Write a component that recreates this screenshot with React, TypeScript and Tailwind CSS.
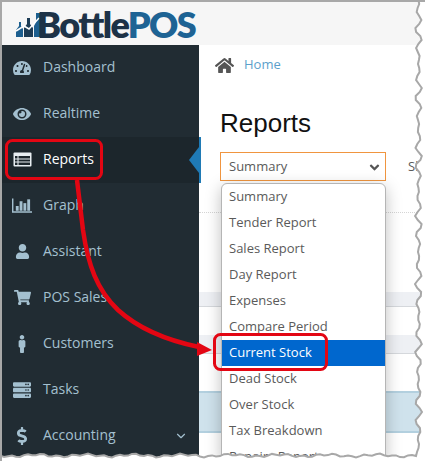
import { FaTachometerAlt, FaEye, FaUser, FaShoppingCart, FaMale, FaServer, FaDollarSign, FaHome, FaAngleDown } from "react-icons/fa";
import { FiChevronDown } from "react-icons/fi";

function ListAltIcon() {
  return (
    <svg width="19" height="15" viewBox="0 0 19 15">
      <rect x="0.5" y="0.5" width="18" height="14" rx="1" fill="#e8eef2" />
      <rect x="2" y="4" width="15" height="9" fill="#1c262c" />
      <path d="M5 4v9M2 7h15M2 10h15" stroke="#e8eef2" strokeWidth="1" />
    </svg>
  );
}

function BarChartIcon() {
  return (
    <svg width="21" height="16" viewBox="0 0 21 16" fill="#a4c0d0">
      <path d="M0 0h1.5v13.5H21V15H0z" />
      <rect x="4" y="8" width="3" height="5" />
      <rect x="8" y="3" width="3" height="10" />
      <rect x="12" y="5" width="3" height="8" />
      <rect x="16" y="1" width="3" height="12" />
    </svg>
  );
}

const NAV = [
  { name: "Dashboard", icon: <FaTachometerAlt size={18} /> },
  { name: "Realtime", icon: <FaEye size={18} /> },
  { name: "Reports", icon: <ListAltIcon />, active: true },
  { name: "Graph", icon: <BarChartIcon /> },
  { name: "Assistant", icon: <FaUser size={15} /> },
  { name: "POS Sales", icon: <FaShoppingCart size={17} /> },
  { name: "Customers", icon: <FaMale size={18} /> },
  { name: "Tasks", icon: <FaServer size={18} /> },
  { name: "Accounting", icon: <FaDollarSign size={18} />, caret: true },
];

const OPTIONS = [
  "Summary",
  "Tender Report",
  "Sales Report",
  "Day Report",
  "Expenses",
  "Compare Period",
  "Current Stock",
  "Dead Stock",
  "Over Stock",
  "Tax Breakdown",
  "Repairs Report",
];

// jagged screenshot edge, right side then bottom
function tornEdge() {
  const pts: string[] = [];
  for (let y = 0; y <= 455; y += 4) {
    const x = 418.5 + Math.sin(y * 0.37) * 2 + Math.sin(y * 1.3) * 1.5;
    pts.push(`${x.toFixed(1)},${y}`);
  }
  for (let x = 416; x >= 0; x -= 4) {
    const y = 455.5 + Math.sin(x * 0.41) * 1 + Math.sin(x * 1.7) * 1;
    pts.push(`${x},${y.toFixed(1)}`);
  }
  return pts.join(" ");
}

function Logo() {
  return (
    <div className="flex items-center pl-[13px] h-full">
      <svg width="30" height="28" viewBox="0 0 30 28" className="mt-[1px]">
        <path d="M1 27v-7l3-4v-4h2v4l2 3v8z" fill="#1d5f8f" />
        <path d="M9 27v-9l3-4v-6h3v6l3 4v9z" fill="#1d3c55" />
        <path d="M19 27v-11l2-4V3h4v9l2 3v12z" fill="#1d5f8f" />
        <path d="M1 21l8-5 5 3 10-11" fill="none" stroke="#fff" strokeWidth="1.5" />
      </svg>
      <span className="font-['Lato',sans-serif] font-extrabold text-[36px] leading-none tracking-[-1.6px] -ml-[8px] text-[#1d3247]">
        Bottle<span className="text-[#1e6394]">POS</span>
      </span>
    </div>
  );
}

export default function App() {
  return (
    <div className="relative w-[425px] h-[461px] overflow-hidden bg-white border-t-2 border-l-2 border-[#a8a8a8] font-['Open_Sans',sans-serif]">
      <header className="h-[43px] bg-[#f6f6f6]">
        <Logo />
      </header>

      <div className="flex">
        {/* Sidebar */}
        <nav className="w-[197px] h-[416px] shrink-0 bg-[#212c33]">
          {NAV.map((item) => (
            <div
              key={item.name}
              className={`relative flex items-center h-[46px] pl-[10px] pb-[3px] text-[14px] ${item.active ? "bg-[#1c262c] text-white" : "text-[#a4c0d0]"}`}
            >
              <span className="flex justify-center w-[20px] pt-[2px]">{item.icon}</span>
              <span className="ml-[11px]">{item.name}</span>
              {item.caret && <FiChevronDown size={14} className="absolute right-[11px] top-[16px]" />}
              {item.active && (
                <>
                  <span className="absolute right-[-2px] top-0 bottom-0 w-[2px] bg-[#1f7ab5]" />
                  <span className="absolute right-0 top-[10px] w-0 h-0 border-y-[13px] border-y-transparent border-r-[10px] border-r-[#1f7ab5]" />
                </>
              )}
            </div>
          ))}
        </nav>

        {/* Main */}
        <main className="relative flex-1 min-w-0">
          <div className="flex items-center gap-[10px] pl-[16px] h-[40px] text-[13px] text-[#5c9fcb]">
            <FaHome size={19} className="text-[#555]" />
            <span>Home</span>
          </div>
          <h1 className="pl-[21px] mt-[19px] h-[38px] font-['Liberation_Sans',sans-serif] text-[26px] leading-[38px] text-[#111]">
            Reports
          </h1>
          <div className="flex items-center pl-[21px] mt-[10px]">
            <div className="flex items-center justify-between w-[166px] shrink-0 h-[29px] pl-[8px] pr-[3px] pt-[1px] border border-[#f0953f] text-[13px] text-[#5a5a5a]">
              Summary
              <FaAngleDown size={15} className="text-[#555]" />
            </div>
            <span className="ml-[22px] text-[13px] text-[#5a5a5a] whitespace-nowrap">Show</span>
          </div>

          {/* page content behind the open select */}
          <div className="mt-[31px] border-t border-dotted border-[#d5d5d5]" />
          <div className="mt-[79px] h-[15px] bg-[#eef0f4] border-b border-[#d5d8dc]" />
          <div className="mt-[28px] h-[19px] bg-[#eef0f4] border-b border-[#d5d8dc]" />
          <div className="mt-[37px] h-[42px] bg-[#cfe2ec] border-y-2 border-[#b3d0df]" />

          {/* open select list */}
          <ul className="absolute left-[22px] top-[138px] w-[165px] h-[278px] overflow-hidden bg-white border border-[#b5b5b5] rounded-t-[6px] text-[13px] text-[#5a5a5a] shadow-[0_4px_16px_rgba(0,0,0,0.25)]">
            {OPTIONS.map((opt) => (
              <li
                key={opt}
                className={`flex items-center h-[26px] pl-[7px] ${opt === "Current Stock" ? "bg-[#0067ce] text-white" : ""}`}
              >
                {opt}
              </li>
            ))}
          </ul>
        </main>
      </div>

      {/* red call-outs */}
      <svg className="absolute -left-[2px] -top-[2px] pointer-events-none" width="425" height="461">
        <rect x="6.5" y="140.5" width="95" height="38" rx="6" fill="none" stroke="#e30613" strokeWidth="3" />
        <rect x="214.5" y="334.5" width="112" height="35" rx="6" fill="none" stroke="#e30613" strokeWidth="3" />
        <path d="M77 180L83 230C88 265 97 290 118 310C140 330 170 341 199 347" fill="none" stroke="#e30613" strokeWidth="4.5" />
        <path d="M212 350L197 342L197 356Z" fill="#e30613" />
      </svg>

      {/* torn edge */}
      <svg className="absolute -left-[2px] -top-[2px] pointer-events-none" width="425" height="461">
        <polygon points={`${tornEdge()} 0,461 425,461 425,0`} fill="#fff" />
        <polyline points={tornEdge()} fill="none" stroke="#a8a8a8" strokeWidth="2" />
      </svg>
    </div>
  );
}
